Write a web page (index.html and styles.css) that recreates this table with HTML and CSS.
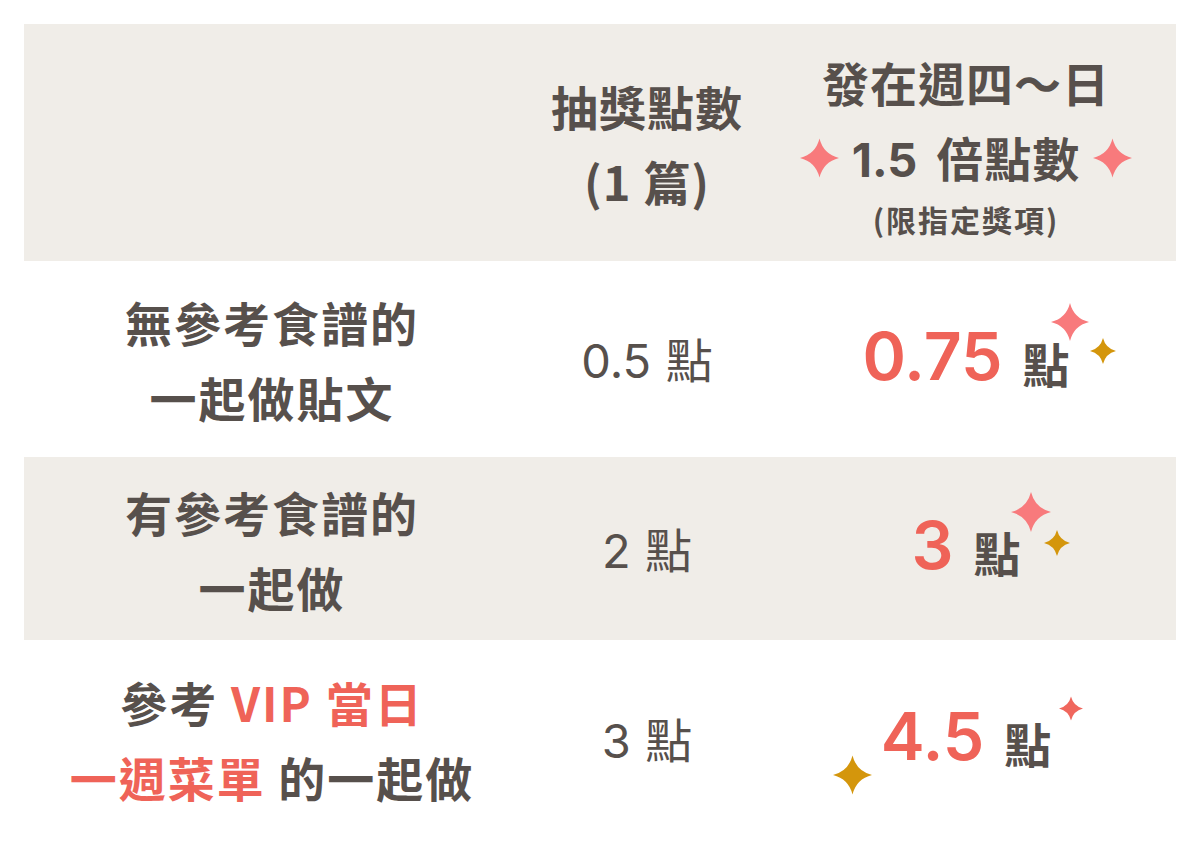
FILE: index.html
```html
<!DOCTYPE html>
<html lang="zh-Hant">
<head>
<meta charset="utf-8">
<title>點數表</title>
<link rel="stylesheet" href="styles.css">
</head>
<body>
<div class="table">
  <div class="row head">
    <div class="cell c1"></div>
    <div class="cell c2">
      <p class="line">抽獎點數</p>
      <p class="line">(1 篇)</p>
    </div>
    <div class="cell c3">
      <p class="line">發在週四～日</p>
      <p class="line bonus">
        <svg class="spark pink" viewBox="0 0 40 40"><path d="M20 0 Q24 16 40 20 Q24 24 20 40 Q16 24 0 20 Q16 16 20 0Z"/></svg>
        <span><span class="num rate">1.5</span>倍點數</span>
        <svg class="spark pink" viewBox="0 0 40 40"><path d="M20 0 Q24 16 40 20 Q24 24 20 40 Q16 24 0 20 Q16 16 20 0Z"/></svg>
      </p>
      <p class="note">(限指定獎項)</p>
    </div>
  </div>

  <div class="row r1">
    <div class="cell c1">
      <p class="line label">無參考食譜的</p>
      <p class="line label">一起做貼文</p>
    </div>
    <div class="cell c2"><p class="val"><span class="num">0.5</span> 點</p></div>
    <div class="cell c3">
      <div class="big">
        <span class="bignum">0.75</span><span class="unit">點</span>
        <svg class="spark pink s1a" viewBox="0 0 40 40"><path d="M20 0 Q24 16 40 20 Q24 24 20 40 Q16 24 0 20 Q16 16 20 0Z"/></svg>
        <svg class="spark gold s1b" viewBox="0 0 40 40"><path d="M20 0 Q24 16 40 20 Q24 24 20 40 Q16 24 0 20 Q16 16 20 0Z"/></svg>
      </div>
    </div>
  </div>

  <div class="row r2">
    <div class="cell c1">
      <p class="line label">有參考食譜的</p>
      <p class="line label">一起做</p>
    </div>
    <div class="cell c2"><p class="val"><span class="num">2</span> 點</p></div>
    <div class="cell c3">
      <div class="big">
        <span class="bignum">3</span><span class="unit">點</span>
        <svg class="spark pink s2a" viewBox="0 0 40 40"><path d="M20 0 Q24 16 40 20 Q24 24 20 40 Q16 24 0 20 Q16 16 20 0Z"/></svg>
        <svg class="spark gold s2b" viewBox="0 0 40 40"><path d="M20 0 Q24 16 40 20 Q24 24 20 40 Q16 24 0 20 Q16 16 20 0Z"/></svg>
      </div>
    </div>
  </div>

  <div class="row r3">
    <div class="cell c1">
      <p class="line label">參考 <span class="hl">VIP 當日</span></p>
      <p class="line label"><span class="hl">一週菜單</span> 的一起做</p>
    </div>
    <div class="cell c2"><p class="val"><span class="num">3</span> 點</p></div>
    <div class="cell c3">
      <div class="big">
        <span class="bignum">4.5</span><span class="unit">點</span>
        <svg class="spark coral s3a" viewBox="0 0 40 40"><path d="M20 0 Q24 16 40 20 Q24 24 20 40 Q16 24 0 20 Q16 16 20 0Z"/></svg>
        <svg class="spark gold s3b" viewBox="0 0 40 40"><path d="M20 0 Q24 16 40 20 Q24 24 20 40 Q16 24 0 20 Q16 16 20 0Z"/></svg>
      </div>
    </div>
  </div>
</div>
</body>
</html>
```

FILE: styles.css
```css
* { box-sizing: border-box; }
html, body { margin: 0; padding: 0; background: #ffffff; }
body {
  padding: 24px;
  font-family: "Noto Sans CJK TC", "Noto Sans", sans-serif;
  color: #57504c;
}
p { margin: 0; }

.table {
  width: 1152px;
}

.row {
  display: grid;
  grid-template-columns: 496px 254px 1fr;
}
.head { height: 237px; background: #f0ede8; }
.r1 { height: 196px; background: #ffffff; }
.r2 { height: 183px; background: #f0ede8; }
.r3 { height: 198px; background: #ffffff; }

.cell {
  display: flex;
  flex-direction: column;
  align-items: center;
  justify-content: center;
  text-align: center;
}
.c3 { padding-right: 18px; }

.line {
  font-size: 47px;
  font-weight: 700;
  line-height: 75px;
  white-space: nowrap;
  letter-spacing: 1px;
}
.label { letter-spacing: 2px; }
.num { font-family: "Inter", "Noto Sans CJK TC", sans-serif; }
.rate { margin-right: 19px; letter-spacing: 0; }

.bonus {
  display: flex;
  align-items: center;
  gap: 13px;
}
.bonus .spark { width: 39px; height: 40px; }

.note {
  font-size: 30px;
  font-weight: 700;
  line-height: 45px;
  letter-spacing: 2px;
}

.hl { color: #ef6358; }

.val {
  font-size: 47px;
  font-weight: 400;
  line-height: 75px;
  white-space: nowrap;
  word-spacing: 4px;
}
.val .num { font-weight: 400; }

.big {
  position: relative;
  display: flex;
  align-items: baseline;
  gap: 20px;
  height: 75px;
  line-height: 75px;
}
.bignum {
  font-family: "Inter", "Noto Sans", sans-serif;
  font-size: 66px;
  font-weight: 600;
  color: #ef6358;
  position: relative;
  top: -3px;
}
.unit {
  font-size: 47px;
  font-weight: 700;
}

.spark { display: block; }
.pink path { fill: #f87a7c; }
.coral path { fill: #f0675d; }
.gold path { fill: #d4960c; }

.big .spark { position: absolute; }
.s1a { width: 38px; height: 40px; right: -19px; top: -20px; }
.s1b { width: 26px; height: 26px; right: -46px; top: 16px; }
.s2a { width: 40px; height: 40px; right: -30px; top: -19px; }
.s2b { width: 26px; height: 26px; right: -49px; top: 19px; }
.s3a { width: 24px; height: 27px; right: -32px; top: -7px; }
.s3b { width: 39px; height: 40px; left: -48px; top: 53px; }
```
